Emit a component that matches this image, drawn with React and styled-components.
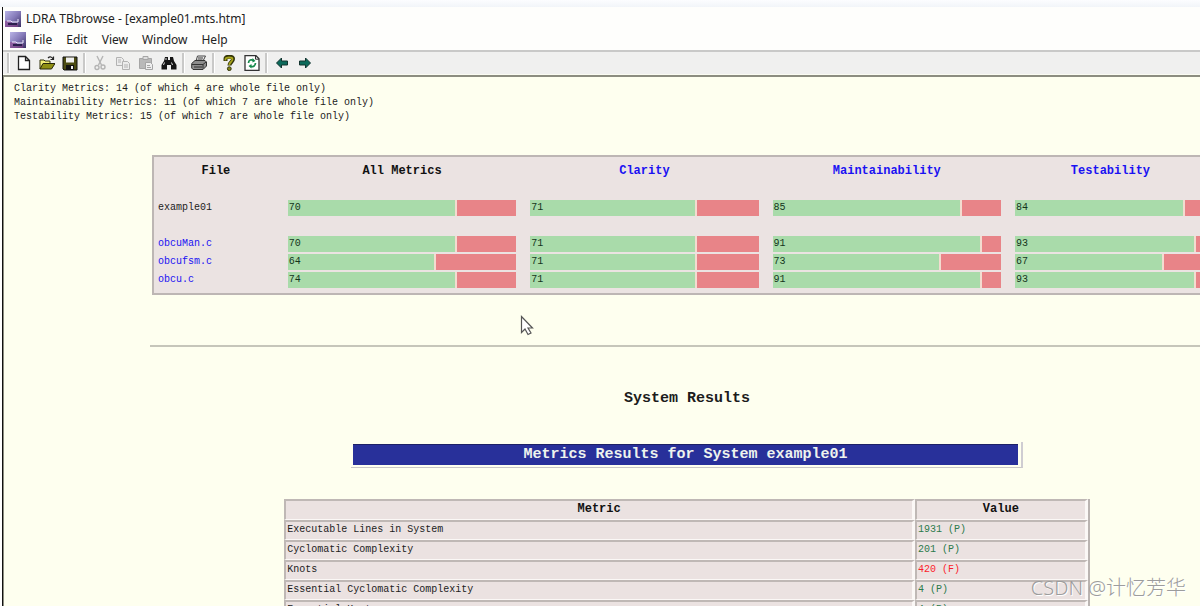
import React from "react";
import styled, { createGlobalStyle } from "styled-components";

const GlobalStyle = createGlobalStyle`
  * { box-sizing: border-box; }
  html, body, #root { height: 100%; }
  body { margin: 0; overflow: hidden; background: #fff; }
`;

const Screen = styled.div`
  position: relative;
  display: flex;
  flex-direction: column;
  height: 100vh;
  overflow: hidden;
  padding-left: 2px;
  font-family: "Noto Sans", "Open Sans", sans-serif;
  font-size: 12px;
  color: #222;
`;

const Backdrop = styled.div`
  flex: none;
  height: 7px;
  margin-left: -2px;
  background: linear-gradient(#fcfdff, #f2f5f9);
`;

const Window = styled.div`
  flex: 1;
  min-height: 0;
  display: flex;
  flex-direction: column;
  border-left: 1px solid #111;
  background: #fefefc;
`;

const TitleBar = styled.header`
  flex: none;
  display: flex;
  align-items: center;
  gap: 5px;
  height: 23px;
  padding-left: 2px;
`;

const Title = styled.h1`
  margin: 0;
  font-size: 12px;
  font-weight: 400;
  line-height: 16px;
`;

const MenuBar = styled.nav`
  flex: none;
  display: flex;
  align-items: center;
  gap: 14px;
  height: 20px;
  padding-left: 7px;
`;

const MenuButton = styled.button`
  border: 0;
  padding: 0;
  background: none;
  font: inherit;
  line-height: 16px;
  color: inherit;
`;

const MenuIcon = styled.span`
  display: flex;
  margin-right: -7px;
`;

const ToolBar = styled.div`
  flex: none;
  display: flex;
  align-items: center;
  height: 25px;
  padding-left: 2px;
  background: #f0f0ef;
  border-top: 2px solid #c9c9c8;
  border-bottom: 1px solid #fbfcf2;
`;

const ToolButton = styled.button`
  display: flex;
  align-items: center;
  justify-content: center;
  width: 23px;
  height: 20px;
  padding: 0;
  border: 0;
  background: none;
`;

const Separator = styled.span`
  width: 7px;
  height: 20px;
  display: flex;
  justify-content: center;
  &::before {
    content: "";
    width: 2px;
    background: #c9c9c8;
    border-right: 1px solid #fff;
  }
`;

const Document = styled.main`
  flex: 1;
  min-height: 0;
  overflow: hidden;
  padding: 5px 0 0 10px;
  border-top: 2px solid #8c8d80;
  border-left: 1px solid #8c8d80;
  background: #feffef;
  font-family: "Liberation Mono", monospace;
  font-size: 10px;
  line-height: 14px;
  color: #1c1c1c;
`;

const Summary = styled.p`
  margin: 0;
`;

const Report = styled.div`
  margin: 31px -24px 0 136px;
`;

const Overview = styled.table`
  width: 98.5%;
  margin-left: 2px;
  table-layout: fixed;
  border-collapse: separate;
  border-spacing: 0;
  border: 2px solid #bdb6b4;
  border-right-color: #d5cfcd;
  background: #ebe3e2;
  padding-bottom: 4px;
`;

const Column = styled.col`
  width: ${(p) => p.$width};
`;

const OverviewHead = styled.th`
  height: 42px;
  padding: 7px 14px 0 ${(p) => (p.$first ? "4px" : "0")};
  vertical-align: top;
  font-size: 12px;
  line-height: 14px;
  font-weight: 700;
  color: #111;
  &:last-child { padding-right: 2px; }
`;

const OverviewCell = styled.td`
  height: 18px;
  padding: 1px 14px 1px 0;
  &:last-child { padding-right: 2px; }
`;

const FileCell = styled.th`
  height: 18px;
  padding: 0 0 0 4px;
  text-align: left;
  font-weight: 400;
  line-height: 16px;
`;

const SpacerCell = styled.td`
  height: 18px;
  padding: 0;
`;

const DocLink = styled.a`
  color: #1a12f2;
  text-decoration: none;
`;

const Bar = styled.div`
  display: flex;
  gap: 2px;
  height: 16px;
  background: #f3dcd0;
`;

const Pass = styled.div`
  flex: none;
  padding-left: 1px;
  background: #a9dbaa;
  line-height: 16px;
  color: #14351c;
`;

const Fail = styled.div`
  flex: 1;
  background: #e88488;
`;

const Rule = styled.hr`
  margin: 50px 0 0;
  border: 0;
  border-top: 2px solid #c6c6ba;
`;

const SectionTitle = styled.h2`
  margin: 42px 0 0;
  text-align: center;
  font-size: 15px;
  line-height: 20px;
  font-weight: 700;
`;

const BannerFrame = styled.div`
  width: 62.5%;
  margin: 33px auto 0;
  padding: 2px 3px 2px 2px;
  border-right: 2px solid #cfcdd2;
  border-bottom: 1px solid #c9c7c8;
`;

const Banner = styled.h3`
  margin: 0;
  background: #28309a;
  border-top: 1px solid #1d2166;
  text-align: center;
  font-size: 15px;
  line-height: 20px;
  font-weight: 700;
  color: #eef3ee;
`;

const Metrics = styled.table`
  width: 75%;
  margin: 31px auto 0;
  table-layout: fixed;
  border-collapse: separate;
  border-spacing: 0;
  background: #fbf7f4;
  border-right: 2px solid #bab4b1;
`;

const cellFrame = `
  border: solid;
  border-width: 2px 3px 1px 2px;
  border-color: #bfb8b5 #fbf8f6 #fbf8f6 #bfb8b5;
  background: #ebe2e1;
`;

const MetricHead = styled.th`
  ${cellFrame}
  height: 21px;
  padding: 0 0 2px;
  font-size: 12px;
  line-height: 16px;
  font-weight: 700;
  color: #111;
`;

const MetricCell = styled.td`
  ${cellFrame}
  height: 20px;
  padding: 0 0 1px 1px;
  line-height: 16px;
  color: ${(p) => (p.$status === "P" ? "#2c7a4b" : p.$status === "F" ? "#fb1d2c" : "#1c1c1c")};
`;

const Watermark = styled.span`
  position: absolute;
  right: 14px;
  bottom: 4px;
  font-family: "Noto Sans", "Noto Sans CJK SC", sans-serif;
  font-size: 20px;
  font-weight: 300;
  line-height: 28px;
  color: #9c9c9c;
  text-shadow: 1px 1px 0 #fff;
`;

const Pointer = styled.svg`
  position: absolute;
  left: 520px;
  top: 315px;
`;

const AppIcon = () => (
  <svg width="16" height="16" viewBox="0 0 16 16" aria-hidden="true">
    <defs>
      <linearGradient id="disc" x1="0" y1="0" x2="1" y2="1">
        <stop offset="0" stopColor="#b9b4e6" />
        <stop offset="0.5" stopColor="#8479b8" />
        <stop offset="1" stopColor="#3a2f62" />
      </linearGradient>
    </defs>
    <rect width="16" height="16" fill="url(#disc)" />
    <path d="M0 16V10h5l2 2h6v4z" fill="#8c3f86" opacity=".55" />
    <path d="M2 10h4l1 1h6V8" fill="none" stroke="#efeaff" strokeWidth="1" />
    <path d="M3 13h9" stroke="#2b1f4d" strokeWidth="2" />
  </svg>
);

const icons = {
  New: (
    <path d="M2.5 1.5h7l4 4v9h-11z M9.5 1.5v4h4" fill="#fff" stroke="#222" strokeWidth="1.3" />
  ),
  Open: (
    <>
      <path d="M1 14V5h4l1 1h5v3" fill="#f2ef78" stroke="#33330c" />
      <path d="M1 14l3-5.5h12L12.5 14z" fill="#8f8f13" stroke="#26260a" />
      <path d="M9 3c2-2 4-1 5 1M14.5 1.5v3h-3" fill="none" stroke="#222" strokeWidth="1.2" />
    </>
  ),
  Save: (
    <>
      <path d="M1 2h14v13H2l-1-1z" fill="#4b4b12" stroke="#111" />
      <path d="M4 2.5h8v5H4z" fill="#efefef" />
      <path d="M4 10h8v5H4z" fill="#111" />
      <path d="M9 11h2v3H9z" fill="#eee" />
    </>
  ),
  Cut: (
    <g fill="none" stroke="#b4b4b4" strokeWidth="1.4">
      <path d="M5 1l4.5 9M11 1l-4.5 9" />
      <circle cx="5" cy="12.5" r="2" />
      <circle cx="11" cy="12" r="2" />
    </g>
  ),
  Copy: (
    <g fill="#ececec" stroke="#b2b2b2">
      <path d="M1.5 2.5h5l2 2v6h-7z" />
      <path d="M7.5 6.5h5l2 2v6h-7z" />
      <path d="M3 5h3M3 7h3M9 10h4M9 12h4" />
    </g>
  ),
  Paste: (
    <g stroke="#a5a5a5">
      <path d="M1.5 3.5h12v10h-12z" fill="#b9b9b9" />
      <path d="M5 1.5h5v3H5z" fill="#ddd" />
      <path d="M7.5 7.5h5l2 2v5h-7z" fill="#eee" />
      <path d="M9 10.5h3M9 12.5h4" />
    </g>
  ),
  Find: (
    <>
      <path d="M4 2h3v3h2V2h3l1 4 2.500 4v4.500H10V10H6v4.500H.5V10L3 6z" fill="#151515" />
      <path d="M3.5 7.5L2.5 10M10.5 7.5l1 2.5M5 3v2" stroke="#ddd" />
    </>
  ),
  Print: (
    <>
      <path d="M5 6l1.5-5h8L12 6z" fill="#eee" stroke="#444" />
      <path d="M.7 8.5L4 5.500h10l1.500 1.500v4L12 14.500H2L.7 13z" fill="#8d8d8d" stroke="#333" />
      <path d="M1 9.5h11l3-2.5M3 12h8M12 9.5v4M7 3h5M6.5 5h5" stroke="#333" fill="none" />
    </>
  ),
  Help: (
    <>
      <path d="M4.5 6V4c0-3 7.500-3 7.500 0 0 3-3.500 3-3.500 6.500" fill="none" stroke="#33350a" strokeWidth="4" />
      <path d="M4.5 5.500V4c0-2 7-2 7 0 0 3-3.200 3-3.200 6" fill="none" stroke="#a8a51b" strokeWidth="1.8" />
      <circle cx="8.3" cy="13.7" r="1.9" fill="#85861a" stroke="#33350a" />
    </>
  ),
  Refresh: (
    <>
      <path d="M1 .7h11l3 3v11.600H1z" fill="#fff" stroke="#333" strokeWidth="1.3" />
      <path d="M11.5 .7v3.500H15" fill="none" stroke="#333" />
      <path d="M4.5 8c0-3 3-4 5-2.500M11.500 8c0 3-3 4.500-5.500 3" fill="none" stroke="#178a4c" strokeWidth="1.7" />
      <path d="M8.5 3v4.500l3-1.500zM7.500 9v4.500L4.500 11z" fill="#178a4c" />
    </>
  ),
  Back: <path d="M2.5 8l5-5v3h6v4h-6v3z" fill="#0c6a5b" stroke="#12342f" />,
  Forward: <path d="M13.5 8l-5-5v3h-6v4h6v3z" fill="#0c6a5b" stroke="#12342f" />,
};

const toolGroups = [
  ["New", "Open", "Save"],
  ["Cut", "Copy", "Paste", "Find"],
  ["Print"],
  ["Help", "Refresh"],
  ["Back", "Forward"],
];

const overviewColumns = ["All Metrics", "Clarity", "Maintainability", "Testability"];

/* Each score is [value, share of the bar that is filled in percent]. */
const systemRow = { file: "example01", scores: [[70, 73], [71, 72], [85, 82], [84, 88]] };
const fileRows = [
  { file: "obcuMan.c", scores: [[70, 73], [71, 72], [91, 91], [93, 94]] },
  { file: "obcufsm.c", scores: [[64, 64], [71, 72], [73, 73], [67, 77]] },
  { file: "obcu.c", scores: [[74, 73], [71, 72], [91, 91], [93, 94]] },
];

const metrics = [
  ["Executable Lines in System", 1931, "P"],
  ["Cyclomatic Complexity", 201, "P"],
  ["Knots", 420, "F"],
  ["Essential Cyclomatic Complexity", 4, "P"],
  ["Essential Knots", 4, "P"],
];

const ScoreRow = ({ row, linked }) => (
  <tr>
    <FileCell scope="row">
      {linked ? <DocLink href={`#${row.file}`}>{row.file}</DocLink> : row.file}
    </FileCell>
    {row.scores.map(([value, share], i) => (
      <OverviewCell key={i}>
        <Bar>
          <Pass style={{ width: `${share}%` }}>{value}</Pass>
          <Fail />
        </Bar>
      </OverviewCell>
    ))}
  </tr>
);

export default function App() {
  return (
    <>
      <GlobalStyle />
      <Screen>
        <Backdrop />
        <Window>
          <TitleBar>
            <AppIcon />
            <Title>LDRA TBbrowse - [example01.mts.htm]</Title>
          </TitleBar>
          <MenuBar>
            <MenuIcon>
              <AppIcon />
            </MenuIcon>
            {["File", "Edit", "View", "Window", "Help"].map((name) => (
              <MenuButton key={name} type="button">{name}</MenuButton>
            ))}
          </MenuBar>
          <ToolBar>
            {toolGroups.map((group) => (
              <React.Fragment key={group[0]}>
                <Separator />
                {group.map((name) => (
                  <ToolButton key={name} type="button" aria-label={name}>
                    <svg width="16" height="16" viewBox="0 0 16 16">{icons[name]}</svg>
                  </ToolButton>
                ))}
              </React.Fragment>
            ))}
          </ToolBar>
          <Document>
            <Summary>Clarity Metrics: 14 (of which 4 are whole file only)</Summary>
            <Summary>Maintainability Metrics: 11 (of which 7 are whole file only)</Summary>
            <Summary>Testability Metrics: 15 (of which 7 are whole file only)</Summary>
            <Report>
              <Overview>
                <colgroup>
                  <Column $width="12.7%" />
                  <Column $width="23%" />
                  <Column $width="23%" />
                  <Column $width="23%" />
                  <Column />
                </colgroup>
                <thead>
                  <tr>
                    <OverviewHead scope="col" $first>File</OverviewHead>
                    {overviewColumns.map((name, i) => (
                      <OverviewHead key={name} scope="col">
                        {i === 0 ? name : <DocLink href={`#${name}`}>{name}</DocLink>}
                      </OverviewHead>
                    ))}
                  </tr>
                </thead>
                <tbody>
                  <ScoreRow row={systemRow} />
                  <tr>
                    <SpacerCell colSpan={5} />
                  </tr>
                  {fileRows.map((row) => (
                    <ScoreRow key={row.file} row={row} linked />
                  ))}
                </tbody>
              </Overview>
              <Rule />
              <SectionTitle>System Results</SectionTitle>
              <BannerFrame>
                <Banner>Metrics Results for System example01</Banner>
              </BannerFrame>
              <Metrics>
                <colgroup>
                  <Column />
                  <Column $width="21.5%" />
                </colgroup>
                <thead>
                  <tr>
                    <MetricHead scope="col">Metric</MetricHead>
                    <MetricHead scope="col">Value</MetricHead>
                  </tr>
                </thead>
                <tbody>
                  {metrics.map(([name, value, status]) => (
                    <tr key={name}>
                      <MetricCell>{name}</MetricCell>
                      <MetricCell $status={status}>{`${value} (${status})`}</MetricCell>
                    </tr>
                  ))}
                </tbody>
              </Metrics>
            </Report>
          </Document>
        </Window>
        <Pointer width="14" height="21" viewBox="0 0 14 21" aria-hidden="true">
          <path d="M1.5 1.5v16l3.500-3.500 3 5.500 3-1.500-3-5h4.500z" fill="#fff" stroke="#555" strokeWidth="1.2" />
        </Pointer>
        <Watermark>CSDN @计忆芳华</Watermark>
      </Screen>
    </>
  );
}
